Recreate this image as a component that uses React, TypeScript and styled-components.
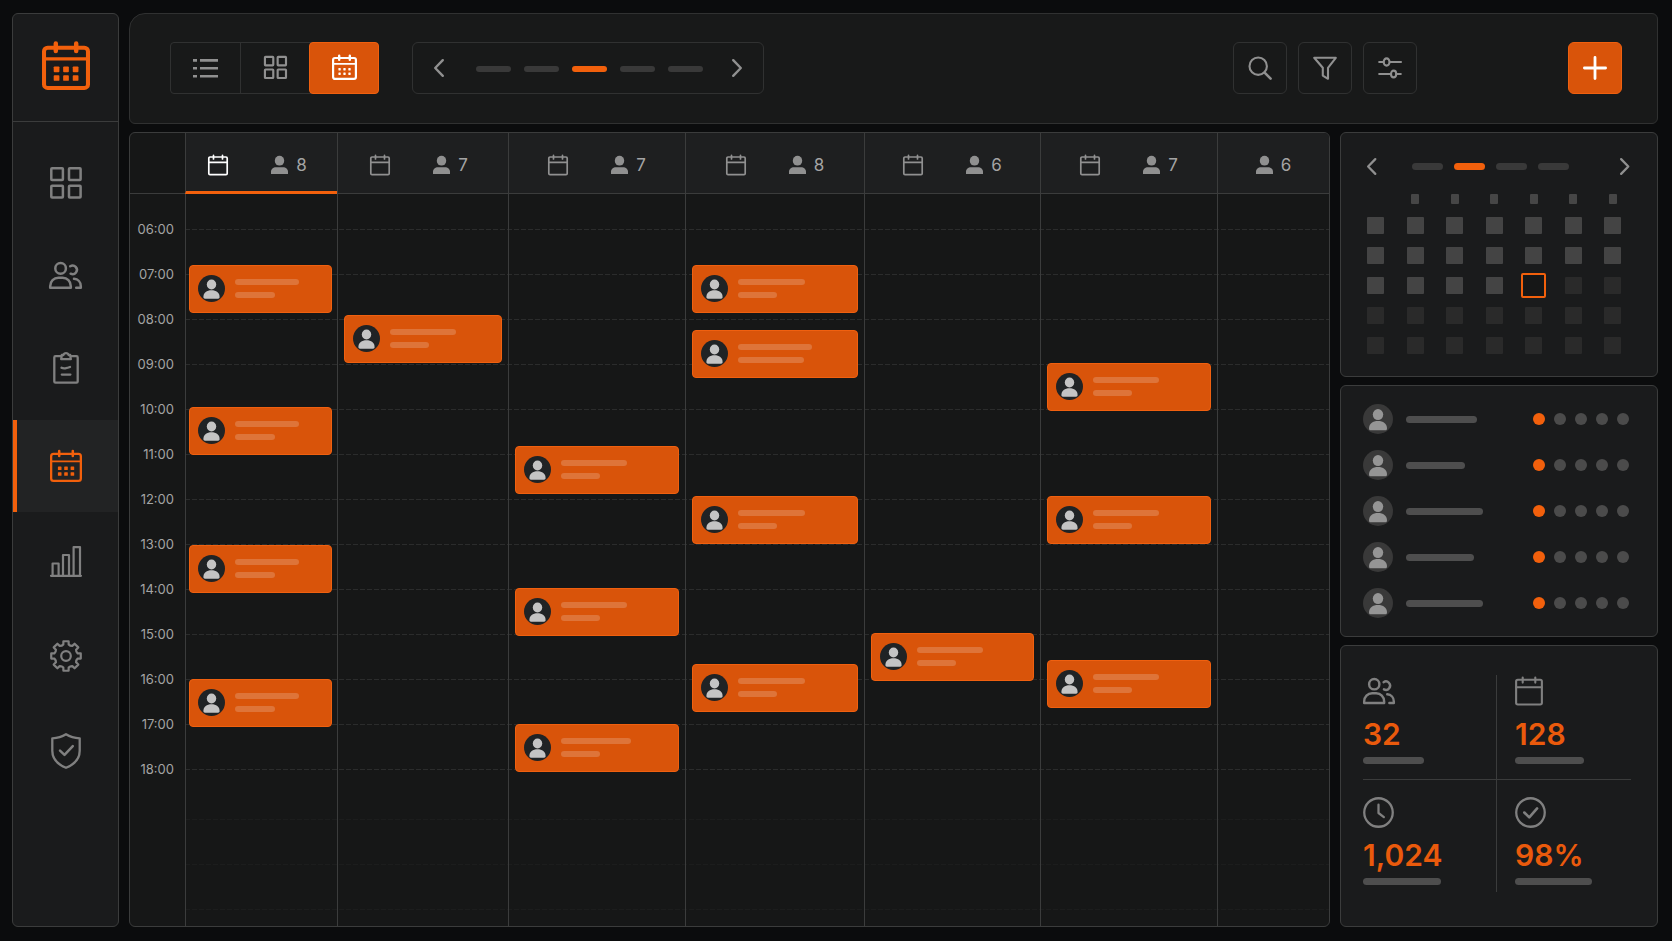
import React from "react";
import styled, { createGlobalStyle, css } from "styled-components";

const c = {
  page: "#0b0c0d",
  panel: "#1a1b1c",
  bar: "#181919",
  body: "#161717",
  head: "#1e1f20",
  line: "#3b3c3c",
  softLine: "#303131",
  orange: "#f2600c",
  figure: "#ea5a0c",
  event: "#d9540a",
  eventEdge: "#f0600f",
  icon: "#808080",
  iconLight: "#909090",
  muted: "#393939",
  pill: "#4e4e4e",
  text: "#a4a4a4",
};

const GlobalStyle = createGlobalStyle`
  * { box-sizing: border-box; }
  body { margin: 0; background: ${c.page}; color: ${c.text}; font-family: Inter, "Liberation Sans", sans-serif; }
  button { margin: 0; padding: 0; border: 0; background: none; color: inherit; font: inherit; cursor: pointer; }
  ul { margin: 0; padding: 0; list-style: none; }
  svg { display: block; flex: none; overflow: visible; }
`;

/* ---------- icons ---------- */

const line = (width: number) => ({
  fill: "none",
  stroke: "currentColor",
  strokeWidth: width,
  strokeLinecap: "round" as const,
  strokeLinejoin: "round" as const,
});

const MonthIcon = ({ size, stroke = 2.4, dot = 3.6 }: { size: number; stroke?: number; dot?: number }) => (
  <svg width={size} height={size} viewBox="0 0 32 32" {...line(stroke)}>
    <rect x={stroke / 2} y="3.8" width={32 - stroke} height={28.2 - stroke / 2} rx="2.4" />
    <path d="M1.5 11.3h29" strokeWidth={stroke * 0.8} />
    <path d="M9.2 1v5M22.8 1v5" strokeWidth={stroke * 1.1} />
    {[9.7, 16, 22.4].map((x) =>
      [18.2, 24].map((y) => (
        <rect key={`${x}-${y}`} x={x - dot / 2} y={y - dot / 2} width={dot} height={dot} rx="0.6" fill="currentColor" stroke="none" />
      ))
    )}
  </svg>
);

const DayIcon = ({ size, stroke = 1.7 }: { size: number; stroke?: number }) => (
  <svg width={size} height={size} viewBox="0 0 20 20" {...line(stroke)}>
    <rect x="0.8" y="2" width="18.4" height="17.6" rx="1.2" />
    <path d="M1 7.3h18M5.5 0.4v3.6M14.5 0.4v3.6" />
  </svg>
);

const TilesIcon = ({ size, stroke }: { size: number; stroke: number }) => (
  <svg width={size} height={size} viewBox="0 0 32 32" {...line(stroke)}>
    <rect x="1.3" y="1.3" width="11.6" height="11.8" rx="0.8" />
    <rect x="19" y="1.3" width="11.6" height="11.8" rx="0.8" />
    <rect x="1.3" y="18.8" width="11.6" height="11.8" rx="0.8" />
    <rect x="19" y="18.8" width="11.6" height="11.8" rx="0.8" />
  </svg>
);

const UsersIcon = ({ width }: { width: number }) => (
  <svg width={width} height={(width * 27) / 33} viewBox="0 0 33 27" {...line(2.5)}>
    <circle cx="11.6" cy="6.4" r="5.3" />
    <path d="M1.2 25.8v-1.6c0-5 3.6-8.4 8.2-8.4h4.2c4.6 0 8.2 3.4 8.2 8.4v1.6z" />
    <path d="M21.2 4.3a4.3 4.3 0 1 1 0.4 7.4" />
    <path d="M25 16.8c4 0.3 6.8 3.2 6.8 7.4v1.6h-4.6" />
  </svg>
);

const ClipboardIcon = () => (
  <svg width="26" height="33" viewBox="0 0 26 33" {...line(2.3)}>
    <path d="M7.5 5.2h-5a1.2 1.2 0 0 0-1.2 1.2v24a1.2 1.2 0 0 0 1.2 1.2h21a1.2 1.2 0 0 0 1.2-1.2v-24a1.2 1.2 0 0 0-1.2-1.2h-5" />
    <path d="M8.2 8.2l0.6-4.2h1.6a2.7 2.7 0 0 1 5.2 0h1.6l0.6 4.2z" />
    <path d="M8.5 16.8c2 1 3 0.6 4.5 0.4s2.5-0.6 4-1.2M8.8 23.6h8.6" />
  </svg>
);

const ChartIcon = () => (
  <svg width="32" height="31" viewBox="0 0 32 31" {...line(2.2)}>
    <path d="M1 29.8h30M2.6 29.5v-12h6v12M13 29.5v-20.5h6v20.5M23.6 29.5v-28.3h6.4v28.3" />
  </svg>
);

const gearOutline = (() => {
  const points: string[] = [];
  const at = (r: number, deg: number) => {
    const a = (deg * Math.PI) / 180;
    return `${(16 + r * Math.cos(a)).toFixed(2)} ${(16 + r * Math.sin(a)).toFixed(2)}`;
  };
  for (let i = 0; i < 8; i++) {
    const mid = i * 45 - 90;
    points.push(`${i ? "L" : "M"}${at(11.9, mid - 13)} L${at(15, mid - 10)} L${at(15, mid + 10)} L${at(11.9, mid + 13)}`);
    points.push(`Q${at(10.8, mid + 22.5)} ${at(11.9, mid + 32)}`);
  }
  return points.join(" ") + "Z";
})();

const GearIcon = () => (
  <svg width="32" height="32" viewBox="0 0 32 32" {...line(2.2)}>
    <path d={gearOutline} />
    <circle cx="16" cy="16" r="4.8" />
  </svg>
);

const ShieldIcon = () => (
  <svg width="30" height="36" viewBox="0 0 30 36" {...line(2.3)}>
    <path d="M15 1.2c4 2.4 8.5 3.7 13.7 4.1v12.5c0 8-5.4 13.6-13.7 17-8.3-3.4-13.7-9-13.7-17V5.3c5.2-0.4 9.7-1.7 13.7-4.1z" />
    <path d="M9 17.6l4.5 4.3 8.3-8.7" strokeWidth="2.5" />
  </svg>
);

const ListIcon = () => (
  <svg width="25" height="20" viewBox="0 0 25 20" {...line(2.6)} strokeLinecap="butt">
    <path d="M0 2.4h4M7 2.4h18M0 10.3h4M7 10.3h18M0 18.2h4M7 18.2h18" />
  </svg>
);

const Chevron = ({ flip = false, size = 18 }: { flip?: boolean; size?: number }) => (
  <svg width={(size * 10) / 18} height={size} viewBox="0 0 10 18" {...line(2.4)}>
    <path d={flip ? "M1.2 1.2l7.6 7.8-7.6 7.8" : "M8.8 1.2l-7.6 7.8 7.6 7.8"} />
  </svg>
);

const SearchIcon = () => (
  <svg width="24" height="24" viewBox="0 0 24 24" {...line(2.1)}>
    <circle cx="10.2" cy="10.2" r="8.7" />
    <path d="M16.6 16.6l6 6" strokeWidth="2.6" />
  </svg>
);

const FunnelIcon = () => (
  <svg width="24" height="24" viewBox="0 0 24 24" {...line(2.1)}>
    <path d="M1.2 1.8h21.6l-7.8 10v11l-5.2-3.2v-7.8z" />
  </svg>
);

const SlidersIcon = () => (
  <svg width="24" height="24" viewBox="0 0 24 24" {...line(2.1)}>
    <path d="M1.2 6h4M12 6h11M1.2 18h11M19.2 18h3.6" />
    <ellipse cx="8.6" cy="6" rx="2.9" ry="3.6" />
    <ellipse cx="15.6" cy="18" rx="2.6" ry="3.4" />
  </svg>
);

const PlusIcon = () => (
  <svg width="24" height="24" viewBox="0 0 24 24" {...line(2.8)}>
    <path d="M12 1.4v21.2M1.4 12h21.2" />
  </svg>
);

const ClockIcon = () => (
  <svg width="31" height="31" viewBox="0 0 30 30" {...line(2.2)}>
    <circle cx="15" cy="15" r="13.8" />
    <path d="M15 7.5v8l5.2 4" />
  </svg>
);

const CheckIcon = () => (
  <svg width="31" height="31" viewBox="0 0 30 30" {...line(2.2)}>
    <circle cx="15" cy="15" r="13.8" />
    <path d="M9 15l4.8 4.8 7.6-8.8" strokeWidth="2.5" />
  </svg>
);

const PersonIcon = () => (
  <svg width="17" height="18" viewBox="0 0 17 18" fill="currentColor">
    <ellipse cx="8.5" cy="4.7" rx="4.7" ry="4.9" />
    <path d="M0 18v-2.2c0-2.8 2.2-4.6 5-4.6h7c2.8 0 5 1.8 5 4.6v2.2z" />
  </svg>
);

const Avatar = ({ size, disc, figure }: { size: number; disc: string; figure: string }) => (
  <svg width={size} height={size} viewBox="0 0 27 27">
    <circle cx="13.5" cy="13.5" r="13.5" fill={disc} />
    <ellipse cx="13.5" cy="9.5" rx="4.7" ry="4.9" fill={figure} />
    <path d="M5.4 22c0-4.3 3.4-6.7 8.1-6.7s8.1 2.4 8.1 6.7c0 1.2-0.6 1.7-1.6 1.7H7c-1 0-1.6-0.5-1.6-1.7z" fill={figure} />
  </svg>
);

/* ---------- shared parts ---------- */

const Page = styled.div`
  display: flex;
  gap: 10px;
  min-height: 100vh;
  padding: 13px 14px 14px 12px;
`;

const panel = css`
  background: ${c.panel};
  border: 1px solid ${c.line};
  border-radius: 6px;
`;

const Pill = styled.span<{ $w: number; $h?: number; $color?: string }>`
  flex: none;
  display: block;
  width: ${(p) => p.$w}px;
  height: ${(p) => p.$h ?? 7}px;
  border-radius: 4px;
  background: ${(p) => p.$color ?? c.pill};
`;

/* ---------- sidebar ---------- */

const Sidebar = styled.aside`
  ${panel}
  flex: none;
  width: 107px;
`;

const Logo = styled.a`
  display: flex;
  align-items: center;
  justify-content: center;
  height: 108px;
  padding-bottom: 4px;
  border-bottom: 1px solid ${c.line};
  color: ${c.orange};
`;

const Nav = styled.nav`
  display: flex;
  flex-direction: column;
  gap: 7px;
  padding-top: 15px;
`;

const NavGroup = styled.ul<{ $gap: number }>`
  display: flex;
  flex-direction: column;
  gap: ${(p) => p.$gap}px;
`;

const NavLink = styled.a<{ $active?: boolean }>`
  display: flex;
  align-items: center;
  justify-content: center;
  height: 92px;
  color: ${(p) => (p.$active ? c.orange : c.icon)};
  ${(p) =>
    p.$active &&
    css`
      background: #222324;
      box-shadow: inset 4px 0 0 ${c.orange};
    `}
`;

/* ---------- top bar ---------- */

const Main = styled.div`
  flex: 1;
  min-width: 0;
  display: flex;
  flex-direction: column;
  gap: 8px;
`;

const TopBar = styled.header`
  display: flex;
  align-items: center;
  height: 111px;
  padding: 0 35px 2px 40px;
  background: ${c.bar};
  border: 1px solid ${c.softLine};
  border-radius: 16px 6px 6px 6px;
`;

const Segments = styled.div`
  display: flex;
  height: 52px;
  border: 1px solid ${c.softLine};
  border-radius: 4px;
`;

const Segment = styled.button<{ $active?: boolean }>`
  display: flex;
  align-items: center;
  justify-content: center;
  width: 69px;
  color: ${c.iconLight};
  & + & {
    border-left: 1px solid ${c.softLine};
  }
  ${(p) =>
    p.$active &&
    css`
      && {
        width: 70px;
        margin: -1px -1px -1px 0;
        background: ${c.event};
        border: 1px solid ${c.eventEdge};
        border-radius: 4px;
        color: #fff;
      }
    `}
`;

const Pager = styled.div`
  display: flex;
  height: 52px;
  width: 352px;
  margin-left: 33px;
  border: 1px solid ${c.softLine};
  border-radius: 6px;
`;

const PagerButton = styled.button`
  display: flex;
  align-items: center;
  justify-content: center;
  width: 52px;
  color: ${c.iconLight};
`;

const PagerSteps = styled.div`
  flex: 1;
  display: flex;
  align-items: center;
  justify-content: center;
  gap: 13px;
  padding: 3px 0 0 3px;
`;

const Tools = styled.div`
  display: flex;
  gap: 11px;
  margin-left: auto;
`;

const ToolButton = styled.button<{ $primary?: boolean }>`
  display: flex;
  align-items: center;
  justify-content: center;
  width: 54px;
  height: 52px;
  border: 1px solid ${(p) => (p.$primary ? c.eventEdge : c.softLine)};
  border-radius: 6px;
  background: ${(p) => (p.$primary ? c.event : "none")};
  color: ${(p) => (p.$primary ? "#fff" : c.iconLight)};
  margin-left: ${(p) => (p.$primary ? 151 : 0)}px;
`;

/* ---------- schedule ---------- */

const Content = styled.div`
  flex: 1;
  display: flex;
  gap: 10px;
`;

const columns = css`
  display: grid;
  grid-template-columns: 55px 152fr 171fr 177fr 179fr 176fr 177fr 112fr;
`;

const Schedule = styled.main`
  ${panel}
  flex: 1;
  min-width: 0;
  display: flex;
  flex-direction: column;
  overflow: hidden;
  background: ${c.body};
`;

const DayHeads = styled.div`
  ${columns}
  height: 61px;
`;

const Corner = styled.div`
  border-bottom: 1px solid ${c.line};
`;

const DayHead = styled.div<{ $active?: boolean; $narrow?: boolean }>`
  display: flex;
  align-items: center;
  justify-content: center;
  gap: 43px;
  padding-top: ${(p) => (p.$active ? 5 : 3)}px;
  padding-right: ${(p) => (p.$narrow ? 8 : 0)}px;
  background: ${c.head};
  border-left: 1px solid ${c.line};
  border-bottom: ${(p) => (p.$active ? `3px solid ${c.orange}` : `1px solid ${c.line}`)};
  color: ${(p) => (p.$active ? "#fff" : c.iconLight)};
`;

const Headcount = styled.span`
  display: flex;
  align-items: center;
  gap: 8px;
  color: ${c.iconLight};
  font-size: 17px;
  line-height: 20px;
`;

const Count = styled.span`
  color: ${c.text};
`;

const Timeline = styled.div`
  ${columns}
  flex: 1;
  grid-template-rows: 1fr;
`;

const Hours = styled.div`
  grid-area: 1 / 1;
  padding: 13px 11px 0 0;
`;

const Hour = styled.div`
  height: 45px;
  font-size: 13px;
  line-height: 45px;
  text-align: right;
`;

const HourLines = styled.div`
  grid-area: 1 / 2 / 2 / -1;
`;

const HourLine = styled.div<{ $h: number; $faint?: boolean }>`
  height: ${(p) => p.$h}px;
  background: repeating-linear-gradient(90deg, ${(p) => (p.$faint ? "#1c1d1d" : "#2b2c2c")} 0 5px, transparent 5px 7px) bottom / 100% 1px
    no-repeat;
`;

/* One grid track per pixel of the timeline; 45 tracks make an hour. */
const DayColumn = styled.div<{ $col: number; $tight?: boolean }>`
  grid-area: 1 / ${(p) => p.$col};
  display: grid;
  grid-auto-rows: 1px;
  padding: ${(p) => (p.$tight ? "0 5px 0 3px" : "0 6px 0 6px")};
  border-left: 1px solid ${c.line};
`;

const Event = styled.button`
  display: flex;
  align-items: center;
  gap: 10px;
  padding: 0 8px 2px;
  background: ${c.event};
  border: 1px solid ${c.eventEdge};
  border-radius: 4px;
`;

const EventLines = styled.span`
  display: flex;
  flex-direction: column;
  gap: 7px;
`;

/* ---------- right column ---------- */

const Side = styled.aside`
  flex: none;
  width: 318px;
  display: flex;
  flex-direction: column;
  gap: 8px;
`;

const MonthCard = styled.section`
  ${panel}
  padding: 21px 28px 22px 26px;
`;

const MonthNav = styled.div`
  display: flex;
  align-items: center;
  gap: 11px;
  height: 24px;
  color: ${c.iconLight};
`;

const MonthSteps = styled.div`
  display: flex;
  gap: 11px;
  margin: 0 auto 0 25px;
`;

const Weekdays = styled.div`
  display: grid;
  grid-template-columns: repeat(7, 17px);
  justify-content: space-between;
  justify-items: center;
  margin: 16px 8px 13px 0;
`;

const Weekday = styled.span<{ $blank?: boolean }>`
  width: 8px;
  height: 10px;
  border-radius: 1px;
  background: ${(p) => (p.$blank ? "none" : "#464646")};
`;

const Dates = styled.div`
  display: grid;
  grid-template-columns: repeat(7, 17px);
  grid-auto-rows: 17px;
  justify-content: space-between;
  row-gap: 13px;
  margin-right: 8px;
`;

const DateCell = styled.button<{ $kind: "past" | "today" | "next" }>`
  background: ${(p) => (p.$kind === "past" ? "#444444" : "#2a2a2a")};
  border-radius: 1px;
  ${(p) =>
    p.$kind === "today" &&
    css`
      margin: -4px;
      border: 2px solid ${c.orange};
      border-radius: 2px;
      background: ${c.body};
    `}
`;

const TeamCard = styled.section`
  ${panel}
  padding: 18px 28px 18px 22px;
`;

const TeamList = styled.ul`
  display: flex;
  flex-direction: column;
  gap: 16px;
`;

const Member = styled.li`
  display: flex;
  align-items: center;
  gap: 13px;
  height: 30px;
`;

const Dots = styled.div`
  display: flex;
  gap: 9px;
  margin-left: auto;
`;

const Dot = styled.span<{ $on: boolean }>`
  width: 12px;
  height: 12px;
  border-radius: 50%;
  background: ${(p) => (p.$on ? c.orange : "#4b4b4b")};
`;

const StatsCard = styled.section`
  ${panel}
  flex: 1;
  padding: 29px 26px 34px 22px;
`;

const StatGrid = styled.div`
  display: grid;
  grid-template-columns: 1fr 1fr;
`;

const Stat = styled.div<{ $right: boolean; $lower: boolean }>`
  padding: ${(p) => (p.$lower ? "17px 0 7px" : "1px 0 15px")};
  ${(p) => (p.$right ? "padding-left: 18px;" : `border-right: 1px solid ${c.line};`)}
  ${(p) => !p.$lower && `border-bottom: 1px solid ${c.line};`}
`;

const StatIcon = styled.div`
  display: flex;
  align-items: center;
  height: 30px;
  color: ${c.icon};
`;

const StatValue = styled.div`
  margin: 10px 0 5px;
  color: ${c.figure};
  font-size: 30px;
  font-weight: 600;
  line-height: 36px;
`;

/* ---------- data ---------- */

/* Each event: the track where it starts, then the widths of its two text bars. */
const days: { count: number; calendar: boolean; events: [number, number, number][] }[] = [
  { count: 8, calendar: true, events: [[71, 64, 40], [213, 64, 40], [351, 64, 40], [485, 64, 40]] },
  { count: 7, calendar: true, events: [[121, 66, 39]] },
  { count: 7, calendar: true, events: [[252, 66, 39], [394, 66, 39], [530, 70, 39]] },
  { count: 8, calendar: true, events: [[71, 67, 39], [136, 74, 66], [302, 67, 39], [470, 67, 39]] },
  { count: 6, calendar: true, events: [[439, 66, 39]] },
  { count: 7, calendar: true, events: [[169, 66, 39], [302, 66, 39], [466, 66, 39]] },
  { count: 6, calendar: false, events: [] },
];

const hours = Array.from({ length: 13 }, (_, i) => `${String(i + 6).padStart(2, "0")}:00`);

const stats = [
  { icon: <UsersIcon width={32} />, value: "32", bar: 61, label: "People" },
  { icon: <DayIcon size={28} stroke={1.5} />, value: "128", bar: 69, label: "Bookings" },
  { icon: <ClockIcon />, value: "1,024", bar: 78, label: "Hours" },
  { icon: <CheckIcon />, value: "98%", bar: 77, label: "Completed" },
];

const dateKind = (i: number) => (i < 18 ? "past" : i === 18 ? "today" : "next");

export default function App() {
  return (
    <>
      <GlobalStyle />
      <Page>
        <Sidebar>
          <Logo href="#" aria-label="Home">
            <MonthIcon size={48} stroke={2.7} dot={3.8} />
          </Logo>
          <Nav>
            <NavGroup $gap={0}>
              <li><NavLink href="#" aria-label="Dashboard"><TilesIcon size={32} stroke={2.5} /></NavLink></li>
              <li><NavLink href="#" aria-label="People"><UsersIcon width={33} /></NavLink></li>
              <li><NavLink href="#" aria-label="Tasks"><ClipboardIcon /></NavLink></li>
            </NavGroup>
            <NavGroup $gap={3}>
              <li><NavLink href="#" aria-label="Calendar" aria-current="page" $active><MonthIcon size={32} stroke={2.3} /></NavLink></li>
              <li><NavLink href="#" aria-label="Reports"><ChartIcon /></NavLink></li>
              <li><NavLink href="#" aria-label="Settings"><GearIcon /></NavLink></li>
              <li><NavLink href="#" aria-label="Security"><ShieldIcon /></NavLink></li>
            </NavGroup>
          </Nav>
        </Sidebar>

        <Main>
          <TopBar>
            <Segments>
              <Segment aria-label="List view"><ListIcon /></Segment>
              <Segment aria-label="Board view"><TilesIcon size={23} stroke={3} /></Segment>
              <Segment aria-label="Calendar view" $active><MonthIcon size={25} stroke={2.8} dot={3} /></Segment>
            </Segments>
            <Pager>
              <PagerButton aria-label="Previous"><Chevron /></PagerButton>
              <PagerSteps>
                {[0, 1, 2, 3, 4].map((i) => (
                  <Pill key={i} $w={35} $h={6} $color={i === 2 ? c.orange : c.muted} />
                ))}
              </PagerSteps>
              <PagerButton aria-label="Next"><Chevron flip /></PagerButton>
            </Pager>
            <Tools>
              <ToolButton aria-label="Search"><SearchIcon /></ToolButton>
              <ToolButton aria-label="Filter"><FunnelIcon /></ToolButton>
              <ToolButton aria-label="Options"><SlidersIcon /></ToolButton>
            </Tools>
            <ToolButton aria-label="Add" $primary><PlusIcon /></ToolButton>
          </TopBar>

          <Content>
            <Schedule>
              <DayHeads>
                <Corner />
                {days.map((d, i) => (
                  <DayHead key={i} $active={i === 0} $narrow={i < 2}>
                    {d.calendar && <DayIcon size={20} />}
                    <Headcount>
                      <PersonIcon />
                      <Count>{d.count}</Count>
                    </Headcount>
                  </DayHead>
                ))}
              </DayHeads>
              <Timeline>
                <Hours>
                  {hours.map((h) => (
                    <Hour key={h}>{h}</Hour>
                  ))}
                </Hours>
                <HourLines>
                  {hours.map((h, i) => (
                    <HourLine key={h} $h={i === 0 ? 36 : 45} />
                  ))}
                  <HourLine $h={50} $faint />
                  <HourLine $h={45} $faint />
                  <HourLine $h={45} $faint />
                </HourLines>
                {days.map((d, i) => (
                  <DayColumn key={i} $col={i + 2} $tight={i === 0}>
                    {d.events.map(([start, first, second]) => (
                      <Event key={start} aria-label="Booking" style={{ gridRow: `${start + 1} / span 48` }}>
                        <Avatar size={27} disc="#202325" figure="#c4c4c4" />
                        <EventLines>
                          <Pill $w={first} $h={6} $color="#de7439" />
                          <Pill $w={second} $h={6} $color="#de7439" />
                        </EventLines>
                      </Event>
                    ))}
                  </DayColumn>
                ))}
              </Timeline>
            </Schedule>

            <Side>
              <MonthCard>
                <MonthNav>
                  <button aria-label="Previous month"><Chevron size={17} /></button>
                  <MonthSteps>
                    {[0, 1, 2, 3].map((i) => (
                      <Pill key={i} $w={31} $color={i === 1 ? c.orange : c.muted} />
                    ))}
                  </MonthSteps>
                  <button aria-label="Next month"><Chevron flip size={17} /></button>
                </MonthNav>
                <Weekdays>
                  {[0, 1, 2, 3, 4, 5, 6].map((i) => (
                    <Weekday key={i} $blank={i === 0} />
                  ))}
                </Weekdays>
                <Dates>
                  {Array.from({ length: 35 }, (_, i) => (
                    <DateCell key={i} aria-label={`Day ${i + 1}`} $kind={dateKind(i)} />
                  ))}
                </Dates>
              </MonthCard>

              <TeamCard>
                <TeamList>
                  {[71, 59, 77, 68, 77].map((w, i) => (
                    <Member key={i}>
                      <Avatar size={30} disc="#393939" figure="#959595" />
                      <Pill $w={w} />
                      <Dots>
                        {[0, 1, 2, 3, 4].map((d) => (
                          <Dot key={d} $on={d === 0} />
                        ))}
                      </Dots>
                    </Member>
                  ))}
                </TeamList>
              </TeamCard>

              <StatsCard>
                <StatGrid>
                  {stats.map((s, i) => (
                    <Stat key={s.value} aria-label={s.label} $right={i % 2 === 1} $lower={i > 1}>
                      <StatIcon>{s.icon}</StatIcon>
                      <StatValue>{s.value}</StatValue>
                      <Pill $w={s.bar} />
                    </Stat>
                  ))}
                </StatGrid>
              </StatsCard>
            </Side>
          </Content>
        </Main>
      </Page>
    </>
  );
}
